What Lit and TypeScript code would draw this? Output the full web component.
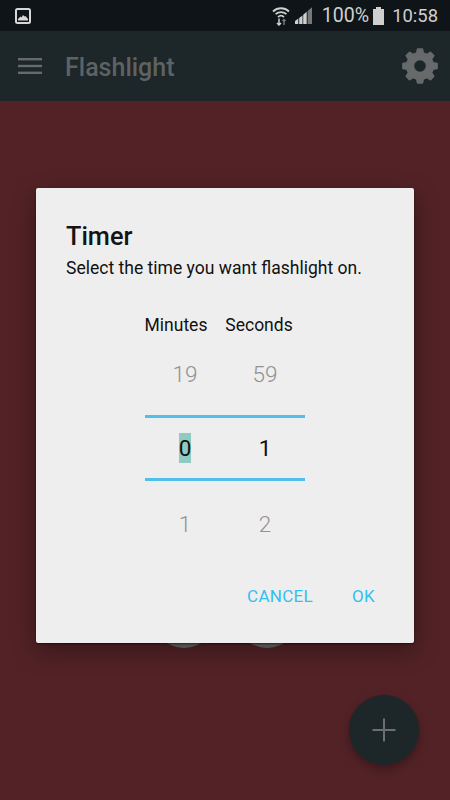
import { LitElement, html, css } from "lit";
import { customElement } from "lit/decorators.js";

function gearPath(cx: number, cy: number, teeth: number, rOut: number, rIn: number): string {
  const pts: string[] = [];
  const step = (Math.PI * 2) / teeth;
  for (let i = 0; i < teeth; i++) {
    const a = i * step - Math.PI / 2;
    const p = (r: number, t: number) => `${(cx + r * Math.cos(t)).toFixed(2)} ${(cy + r * Math.sin(t)).toFixed(2)}`;
    pts.push(p(rIn, a - step * 0.3), p(rOut, a - step * 0.17), p(rOut, a + step * 0.17), p(rIn, a + step * 0.3));
  }
  return "M" + pts.join(" L") + " Z";
}

@customElement("app-root")
export class AppRoot extends LitElement {
  static styles = css`
    :host { display: block; width: 450px; height: 800px; font-family: Roboto, "Liberation Sans", sans-serif; }
    .page { position: relative; width: 450px; height: 800px; overflow: hidden; display: flex; flex-direction: column; background: #522226; }
    .status { height: 31px; flex: none; background: #0e1417; display: flex; align-items: center; padding: 0 12px 0 15px; color: #cfcfcf; box-sizing: border-box; }
    .status svg { display: block; flex: none; }
    .status .right { margin-left: auto; display: flex; align-items: center; }
    .pct { font-size: 19.6px; margin-left: 10px; line-height: 30px; }
    .time { font-size: 18.4px; margin-left: 8px; line-height: 30px; }
    .bat { margin-left: 4px; }
    .signal { margin-left: 5px; }
    .appbar { height: 70px; flex: none; background: #1d2629; display: flex; align-items: center; padding: 0 11px 0 18px; }
    .title { margin-left: 23px; padding-top: 2px; font-size: 25px; font-weight: 500; color: #5e6263; }
    .gear { margin-left: auto; display: block; }
    .menu { display: block; }
    .main { flex: 1; display: flex; justify-content: center; gap: 19px; padding-top: 483px; box-sizing: border-box; }
    .circle { width: 64px; height: 64px; border-radius: 50%; background: #666; }
    .dialog { position: absolute; left: 36px; top: 188px; width: 378px; height: 455px; box-sizing: border-box; background: #eeeeee; border-radius: 2px; box-shadow: 0 8px 26px rgba(0,0,0,.32), 0 1px 2px rgba(0,0,0,.5); padding: 35px 39px 0 30px; display: flex; flex-direction: column; color: #111; }
    .dlg-title { font-size: 25.3px; font-weight: 500; line-height: 28px; color: #141414; }
    .dlg-sub { font-size: 17.55px; line-height: 20px; margin-top: 7px; color: #111; white-space: nowrap; }
    .picker { width: 160px; margin: 0 0 0 79px; display: flex; flex-direction: column; }
    .labels { display: grid; grid-template-columns: 80px 80px; margin-top: 37px; font-size: 17.5px; line-height: 20px; text-align: center; }
    .labels span { white-space: nowrap; }
    .labels span:first-child { margin-left: -9px; margin-right: 9px; }
    .labels span:last-child { margin-left: -6px; margin-right: 6px; }
    .row { display: grid; grid-template-columns: 80px 80px; text-align: center; font-size: 22.5px; }
    .faded { color: #929292; line-height: 30px; font-weight: 300; }
    .r1 { margin-top: 24px; }
    .sel { border-top: 3px solid #4fc0e8; border-bottom: 3px solid #4fc0e8; height: 60px; margin-top: 26px; align-items: center; color: #111; line-height: 28px; font-weight: 400; }
    .r3 { margin-top: 28px; }
    .hl { background: #8fcbc3; padding: 1px 0; display: inline-block; line-height: 28px; }
    .actions { display: flex; justify-content: flex-end; margin-top: 47px; gap: 39px; color: #33bff0; font-size: 17px; line-height: 20px; letter-spacing: .3px; font-weight: 400; }
    .fab { position: absolute; left: 349px; top: 695px; width: 70px; height: 70px; border-radius: 50%; background: #1d2629; box-shadow: 0 4px 10px rgba(0,0,0,.3); display: flex; align-items: center; justify-content: center; }
    .fab svg { display: block; }
  `;

  render() {
    return html`
      <div class="page">
        <div class="status">
          <svg width="16" height="16" viewBox="0 0 16 16">
            <rect x="1" y="1" width="14" height="14" rx="1.5" fill="#0e1417" stroke="#d8d8d8" stroke-width="2"/>
            <path d="M3 12.5 L3 11 L5.5 8.5 L6.5 9.5 L8 7 L9.5 8.5 L10.5 8 L13 11 L13 12.5 Z" fill="#d8d8d8"/>
          </svg>
          <div class="right">
            <svg width="18" height="20" viewBox="0 0 18 20" fill="none" stroke="#cfcfcf">
              <path d="M1 5.5 A11.5 11.5 0 0 1 17 5.5" stroke-width="1.8"/>
              <path d="M3.6 8.2 A8 8 0 0 1 14.4 8.2" stroke-width="1.8"/>
              <path d="M6 11 A4.5 4.5 0 0 1 12 11" stroke-width="1.8"/>
              <path d="M7 12.5 V19 M5 17 L7 19 L9 17" stroke-width="1.5"/>
              <path d="M12 19 V13.5 M10.5 15 L12 13.5 L13.5 15" stroke="#777" stroke-width="1.5"/>
            </svg>
            <svg class="signal" width="17" height="18" viewBox="0 0 17 18">
              <path d="M0 17 v-3 l3.3 -2.5 v5.5 z M4.2 17 v-6 l3.3 -2.6 v8.6 z M8.2 17 v-9.3 l3.5 -3 v12.3 z" fill="#cfcfcf"/>
              <path d="M12.6 17 v-13 l4.4 -3.7 v16.7 z" fill="#777"/>
            </svg>
            <span class="pct">100%</span>
            <svg class="bat" width="11" height="18" viewBox="0 0 11 18">
              <path d="M3 0 h5 v2 h3 v16 h-11 v-16 h3 z" fill="#cfcfcf"/>
            </svg>
            <span class="time">10:58</span>
          </div>
        </div>
        <div class="appbar">
          <svg class="menu" width="24" height="16" viewBox="0 0 24 16" fill="#666a6b">
            <rect y="0" width="24" height="2.4"/>
            <rect y="6.8" width="24" height="2.4"/>
            <rect y="13.6" width="24" height="2.4"/>
          </svg>
          <span class="title">Flashlight</span>
          <svg class="gear" width="38" height="38" viewBox="0 0 38 38">
            <path fill-rule="evenodd" fill="#666a6b" stroke="#666a6b" stroke-width="2" stroke-linejoin="round" d="${gearPath(19, 19, 8, 17, 13.2)}"/>
            <circle cx="19" cy="19" r="5.8" fill="#1d2629"/>
          </svg>
        </div>
        <div class="main">
          <div class="circle"></div>
          <div class="circle"></div>
        </div>
        <div class="dialog">
          <div class="dlg-title">Timer</div>
          <div class="dlg-sub">Select the time you want flashlight on.</div>
          <div class="picker">
            <div class="labels"><span>Minutes</span><span>Seconds</span></div>
            <div class="row faded r1"><span>19</span><span>59</span></div>
            <div class="row sel"><span><span class="hl">0</span></span><span>1</span></div>
            <div class="row faded r3"><span>1</span><span>2</span></div>
          </div>
          <div class="actions"><span>CANCEL</span><span>OK</span></div>
        </div>
        <div class="fab">
          <svg width="24" height="24" viewBox="0 0 24 24" fill="#6b6f70">
            <rect x="0.5" y="11" width="23" height="2"/>
            <rect x="11" y="0.5" width="2" height="23"/>
          </svg>
        </div>
      </div>
    `;
  }
}
